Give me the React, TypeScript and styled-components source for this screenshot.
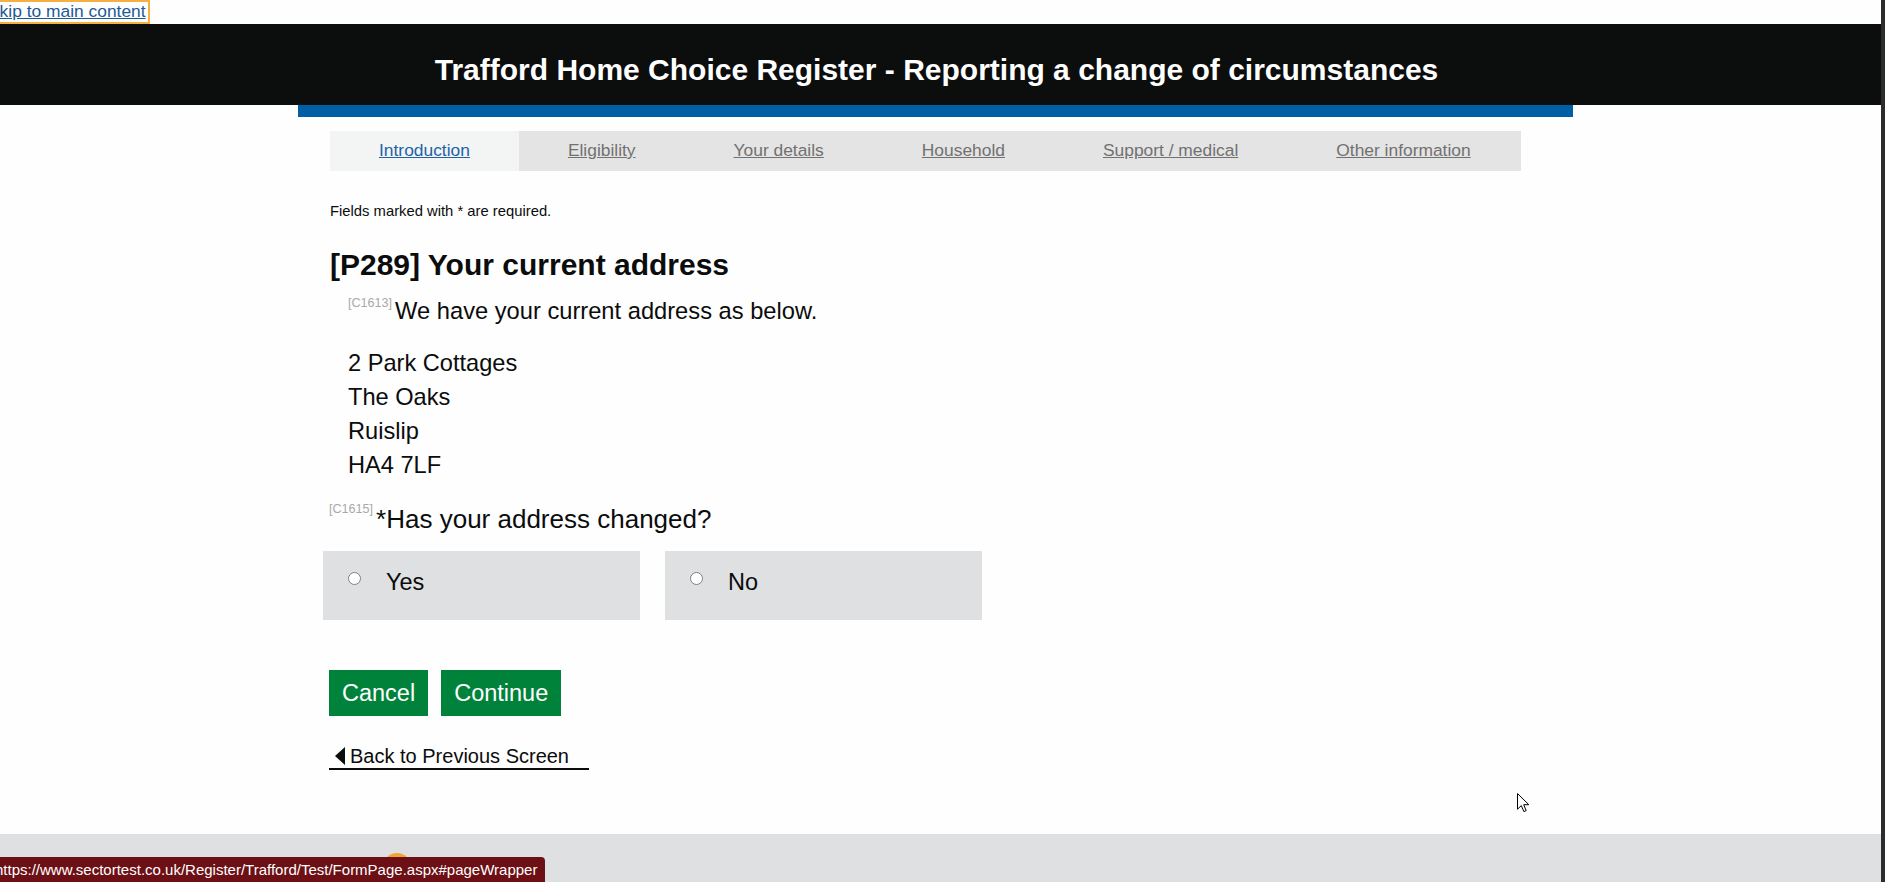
import React from "react";
import styled, { createGlobalStyle } from "styled-components";

const GlobalStyle = createGlobalStyle`
  html, body {
    margin: 0;
    padding: 0;
    background: #fefefe;
    font-family: "Liberation Sans", Arial, sans-serif;
    overflow: hidden;
  }
  * { box-sizing: border-box; }
`;

const Viewport = styled.div`
  display: flex;
  width: 1885px;
  height: 882px;
  overflow: hidden;
`;

const Page = styled.div`
  position: relative;
  flex: 1;
  display: flex;
  flex-direction: column;
  height: 882px;
  overflow: hidden;
  background: #fefefe;
`;

const ScrollStrip = styled.div`
  width: 4px;
  height: 882px;
  background: #2c2c2c;
`;

const SkipLink = styled.a`
  display: block;
  align-self: flex-start;
  height: 24px;
  margin-left: -14px;
  padding-right: 2px;
  border: 2px solid #f5b041;
  font-size: 17.4px;
  line-height: 19px;
  color: #1d5a96;
  text-decoration: underline;
`;

const Header = styled.header`
  height: 81px;
  background: #0c0d0d;
  display: flex;
  justify-content: center;
  align-items: flex-start;
  padding: 29px 8px 0 0;
`;

const Title = styled.h1`
  margin: 0;
  font-size: 30px;
  font-weight: 700;
  line-height: normal;
  color: #ffffff;
`;

const Container = styled.div`
  width: 1275px;
  margin-left: 298px;
`;

const AccentBar = styled.div`
  height: 12px;
  background: #005ea5;
`;

const Content = styled.main`
  padding: 14px 0 0 32px;
  display: flex;
  flex-direction: column;
  align-items: flex-start;
`;

const Tabs = styled.nav`
  display: flex;
  width: 1191px;
  height: 40px;
  background: #e4e4e4;
`;

const Tab = styled.a<{ $active?: boolean }>`
  display: flex;
  align-items: center;
  height: 40px;
  padding: 0 49px 2px;
  font-size: 17.4px;
  line-height: 20px;
  background: ${(p) => (p.$active ? "#f3f4f4" : "transparent")};
  color: ${(p) => (p.$active ? "#1f62a6" : "#717171")};
  text-decoration: underline;
  white-space: nowrap;
`;

const Required = styled.p`
  margin: 32px 0 0;
  font-size: 14.8px;
  line-height: 17px;
  color: #0b0c0c;
`;

const Heading = styled.h2`
  margin: 28px 0 0;
  font-size: 30px;
  line-height: 34px;
  font-weight: 700;
  color: #0b0c0c;
`;

const Code = styled.sup<{ $raise: number }>`
  font-size: 12.6px;
  line-height: 0;
  color: #a9a9a9;
  vertical-align: ${(p) => p.$raise}px;
  margin-right: 3px;
`;

const Intro = styled.p`
  margin: 15px 0 0;
  padding-left: 18px;
  font-size: 23.7px;
  line-height: 28px;
  color: #0b0c0c;
`;

const Address = styled.div`
  margin-top: 21px;
  padding-left: 18px;
  display: flex;
  flex-direction: column;
  font-size: 23.6px;
  line-height: 34px;
  color: #0b0c0c;
`;

const Question = styled.p`
  margin: 22px 0 0 -1px;
  font-size: 26px;
  line-height: 30px;
  color: #0b0c0c;
`;

const Options = styled.div`
  display: flex;
  gap: 25px;
  margin: 17px 0 0 -7px;
`;

const Option = styled.label`
  display: flex;
  align-items: flex-start;
  width: 317px;
  height: 69px;
  padding: 17px 0 0 25px;
  background: #dfe0e2;
  font-size: 23.5px;
  line-height: 28px;
  color: #0b0c0c;
`;

const Radio = styled.input`
  appearance: none;
  width: 13px;
  height: 13px;
  margin: 4px 25px 0 0;
  border: 1px solid #808080;
  border-radius: 50%;
  background: #ffffff;
  flex-shrink: 0;
`;

const Buttons = styled.div`
  display: flex;
  gap: 13px;
  margin: 50px 0 0 -1px;
`;

const Button = styled.button`
  border: 0;
  margin: 0;
  padding: 9px 13px;
  background: #00823b;
  color: #ffffff;
  font-family: "Liberation Sans", Arial, sans-serif;
  font-size: 23.5px;
  line-height: 28px;
`;

const BackLink = styled.a`
  display: flex;
  align-items: center;
  gap: 5px;
  margin: 28px 0 0 -1px;
  padding: 1px 20px 1px 6px;
  border-bottom: 2px solid #0b0c0c;
  font-size: 20px;
  line-height: 22px;
  color: #0b0c0c;
  text-decoration: none;
`;

const Footer = styled.footer`
  margin-top: auto;
  height: 48px;
  flex-shrink: 0;
  background: #dfe0e2;
  display: flex;
  align-items: flex-start;
`;

const FooterLogo = styled.div`
  width: 28px;
  height: 28px;
  margin: 19px 0 0 383px;
  border-radius: 50%;
  background: #f3a531;
`;

const StatusTip = styled.div`
  position: absolute;
  left: 0;
  bottom: 0;
  width: 545px;
  height: 25px;
  background: #6c1016;
  border-top-right-radius: 4px;
  color: #ffffff;
  font-size: 15px;
  line-height: 25px;
  white-space: nowrap;
  overflow: hidden;
`;

const StatusText = styled.span`
  display: block;
  margin-left: -5px;
`;

const Cursor = styled.svg`
  position: absolute;
  left: 1517px;
  top: 793px;
`;

const tabs = [
  "Introduction",
  "Eligibility",
  "Your details",
  "Household",
  "Support / medical",
  "Other information",
];

export default function App() {
  return (
    <>
      <GlobalStyle />
      <Viewport>
        <Page>
          <SkipLink href="#pageWrapper">Skip to main content</SkipLink>
          <Header>
            <Title>Trafford Home Choice Register - Reporting a change of circumstances</Title>
          </Header>
          <Container>
            <AccentBar />
            <Content>
              <Tabs>
                {tabs.map((t, i) => (
                  <Tab key={t} href="#" $active={i === 0}>
                    {t}
                  </Tab>
                ))}
              </Tabs>
              <Required>Fields marked with * are required.</Required>
              <Heading>[P289] Your current address</Heading>
              <Intro>
                <Code $raise={12}>[C1613]</Code>We have your current address as below.
              </Intro>
              <Address>
                <span>2 Park Cottages</span>
                <span>The Oaks</span>
                <span>Ruislip</span>
                <span>HA4 7LF</span>
              </Address>
              <Question>
                <Code $raise={15}>[C1615]</Code>*Has your address changed?
              </Question>
              <Options>
                <Option>
                  <Radio type="radio" name="changed" />
                  Yes
                </Option>
                <Option>
                  <Radio type="radio" name="changed" />
                  No
                </Option>
              </Options>
              <Buttons>
                <Button>Cancel</Button>
                <Button>Continue</Button>
              </Buttons>
              <BackLink href="#">
                <svg width="10" height="18" viewBox="0 0 10 18">
                  <polygon points="10,0 10,18 0,9" fill="#0b0c0c" />
                </svg>
                Back to Previous Screen
              </BackLink>
            </Content>
          </Container>
          <Footer>
            <FooterLogo />
          </Footer>
          <StatusTip>
            <StatusText>https://www.sectortest.co.uk/Register/Trafford/Test/FormPage.aspx#pageWrapper</StatusText>
          </StatusTip>
          <Cursor width="13" height="20" viewBox="0 0 13 20">
            <path
              d="M0.5 0.5 L0.5 16.2 L4.3 12.6 L6.9 18.6 L9.2 17.6 L6.7 11.7 L11.8 11.7 Z"
              fill="#ffffff"
              stroke="#000000"
              strokeWidth="1"
              strokeLinejoin="miter"
            />
          </Cursor>
        </Page>
        <ScrollStrip />
      </Viewport>
    </>
  );
}
